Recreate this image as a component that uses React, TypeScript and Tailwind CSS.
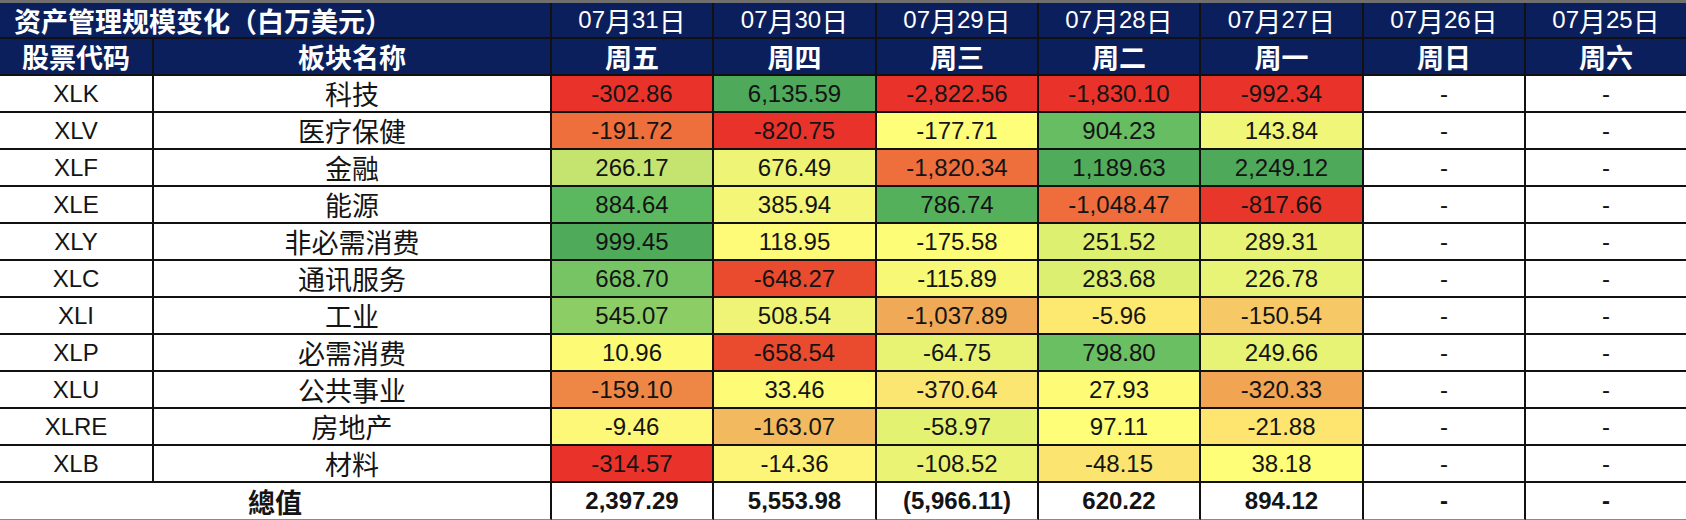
import React from "react";

type Val = [string, string];

const rows: [string, string, Val, Val, Val, Val, Val][] = [
  ["XLK", "科技", ["-302.86", "bg-[#e9332a]"], ["6,135.59", "bg-[#4ea95a]"], ["-2,822.56", "bg-[#e9332a]"], ["-1,830.10", "bg-[#e9332a]"], ["-992.34", "bg-[#e9332a]"]],
  ["XLV", "医疗保健", ["-191.72", "bg-[#ee6f3c]"], ["-820.75", "bg-[#e9332a]"], ["-177.71", "bg-[#fefe78]"], ["904.23", "bg-[#66bd62]"], ["143.84", "bg-[#f0f677]"]],
  ["XLF", "金融", ["266.17", "bg-[#c5e46f]"], ["676.49", "bg-[#eef576]"], ["-1,820.34", "bg-[#ee6e3c]"], ["1,189.63", "bg-[#50ab5a]"], ["2,249.12", "bg-[#4ea95a]"]],
  ["XLE", "能源", ["884.64", "bg-[#5bb85e]"], ["385.94", "bg-[#f3f676]"], ["786.74", "bg-[#55b05c]"], ["-1,048.47", "bg-[#ef6d3c]"], ["-817.66", "bg-[#e9362a]"]],
  ["XLY", "非必需消费", ["999.45", "bg-[#4fab5a]"], ["118.95", "bg-[#fdfb77]"], ["-175.58", "bg-[#fefd78]"], ["251.52", "bg-[#def070]"], ["289.31", "bg-[#e6f374]"]],
  ["XLC", "通讯服务", ["668.70", "bg-[#77c465]"], ["-648.27", "bg-[#ea4a2e]"], ["-115.89", "bg-[#f7f876]"], ["283.68", "bg-[#dcef70]"], ["226.78", "bg-[#e8f475]"]],
  ["XLI", "工业", ["545.07", "bg-[#8ccd66]"], ["508.54", "bg-[#f0f476]"], ["-1,037.89", "bg-[#f0a956]"], ["-5.96", "bg-[#fde870]"], ["-150.54", "bg-[#f6c866]"]],
  ["XLP", "必需消费", ["10.96", "bg-[#fdfb76]"], ["-658.54", "bg-[#ea4a2e]"], ["-64.75", "bg-[#e8f374]"], ["798.80", "bg-[#6abf62]"], ["249.66", "bg-[#e6f374]"]],
  ["XLU", "公共事业", ["-159.10", "bg-[#ee8745]"], ["33.46", "bg-[#fefb77]"], ["-370.64", "bg-[#fbe671]"], ["27.93", "bg-[#fefb77]"], ["-320.33", "bg-[#f1a552]"]],
  ["XLRE", "房地产", ["-9.46", "bg-[#fdf877]"], ["-163.07", "bg-[#f2b95e]"], ["-58.97", "bg-[#e4f272]"], ["97.11", "bg-[#fefe78]"], ["-21.88", "bg-[#fde570]"]],
  ["XLB", "材料", ["-314.57", "bg-[#e9332a]"], ["-14.36", "bg-[#fdf577]"], ["-108.52", "bg-[#eaf373]"], ["-48.15", "bg-[#fbe46f]"], ["38.18", "bg-[#fefe78]"]],
];

const dates = ["07月31日", "07月30日", "07月29日", "07月28日", "07月27日", "07月26日", "07月25日"];
const weekdays = ["周五", "周四", "周三", "周二", "周一", "周日", "周六"];
const totals = ["2,397.29", "5,553.98", "(5,966.11)", "620.22", "894.12", "-", "-"];

const CJK = /[\u4e00-\u9fff\u3000-\u303f\uff00-\uffef]/;

function Mixed({ text }: { text: string }) {
  const parts = text.split(/([\u4e00-\u9fff\u3000-\u303f\uff00-\uffef]+)/).filter((p) => p.length > 0);
  return (
    <>
      {parts.map((p, i) =>
        CJK.test(p) ? (
          <span key={i} className="text-[27px] font-['Noto_Sans_CJK_SC',sans-serif]">
            {p}
          </span>
        ) : (
          <span key={i}>{p}</span>
        )
      )}
    </>
  );
}

const grid =
  "grid grid-cols-[154px_398px_162px_163px_162px_162px_163px_162px_160px]";
const cell = "flex items-center justify-center border-b-2 border-[#111] leading-none";
const rb = "border-r-2";
const cjk = "text-[27px] font-['Noto_Sans_CJK_SC',sans-serif]";

export default function App() {
  return (
    <div className="w-[1686px] h-[520px] overflow-hidden bg-white font-['Liberation_Sans','Noto_Sans_CJK_SC',sans-serif] text-[24px] text-[#141414]">
      <div className="h-[3px] bg-[#6f6f6f]" />
      {/* header row 1 */}
      <div className={`${grid} h-[36px] bg-[#0b1f5c] text-white`}>
        <div className={`${cell} ${rb} col-span-2 justify-start pl-[14px] font-bold`}>
          <span className={cjk}>资产管理规模变化（白万美元）</span>
        </div>
        {dates.map((d, i) => (
          <div key={d} className={`${cell} ${i < 6 ? rb : ""}`}>
            <Mixed text={d} />
          </div>
        ))}
      </div>
      {/* header row 2 */}
      <div className={`${grid} h-[37px] bg-[#0b1f5c] text-white font-bold`}>
        <div className={`${cell} ${rb}`}>
          <span className={cjk}>股票代码</span>
        </div>
        <div className={`${cell} ${rb}`}>
          <span className={cjk}>板块名称</span>
        </div>
        {weekdays.map((w, i) => (
          <div key={w} className={`${cell} ${i < 6 ? rb : ""}`}>
            <span className={cjk}>{w}</span>
          </div>
        ))}
      </div>
      {/* data rows */}
      {rows.map((r) => (
        <div key={r[0]} className={`${grid} h-[37px]`}>
          <div className={`${cell} ${rb}`}>{r[0]}</div>
          <div className={`${cell} ${rb}`}>
            <span className={cjk}>{r[1]}</span>
          </div>
          {[r[2], r[3], r[4], r[5], r[6]].map((v, i) => (
            <div key={i} className={`${cell} ${rb} ${v[1]}`}>
              {v[0]}
            </div>
          ))}
          <div className={`${cell} ${rb}`}>-</div>
          <div className={`${cell}`}>-</div>
        </div>
      ))}
      {/* total row */}
      <div className={`${grid} h-[37px] font-bold`}>
        <div className="col-span-2 flex items-center justify-center border-r-2 border-b border-r-[#111] border-b-[#8a8a8a] leading-none">
          <span className={cjk}>總值</span>
        </div>
        {totals.map((t, i) => (
          <div
            key={i}
            className={`flex items-center justify-center border-b border-b-[#8a8a8a] leading-none ${
              i < 6 ? "border-r-2 border-r-[#111]" : ""
            }`}
          >
            {t}
          </div>
        ))}
      </div>
    </div>
  );
}
